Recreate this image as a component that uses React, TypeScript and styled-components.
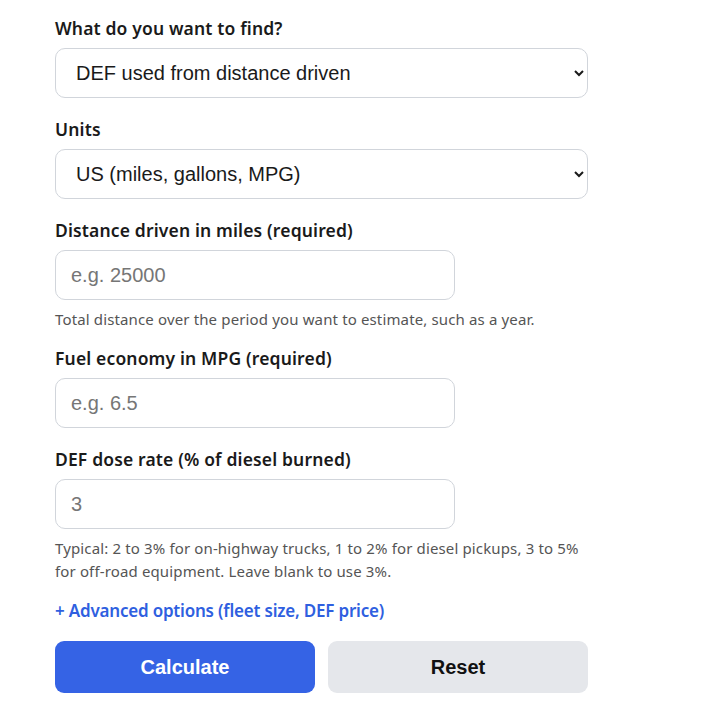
import React from "react";
import styled, { createGlobalStyle } from "styled-components";

const Global = createGlobalStyle`
  html, body { margin: 0; padding: 0; background: #fff; }
  body { font-family: "Noto Sans", "Open Sans", sans-serif; color: #1a1a1a; }
  * { box-sizing: border-box; }
`;

const Form = styled.form`
  width: 533px;
  margin: 17px 0 0 55px;
  display: flex;
  flex-direction: column;
`;

const Field = styled.div`
  display: flex;
  flex-direction: column;
  margin-bottom: 20px;
`;

const Label = styled.label`
  font-family: "Noto Sans", sans-serif;
  font-weight: 600;
  font-size: 17.5px;
  letter-spacing: 0.15px;
  line-height: 23px;
  color: #1a1a1a;
  margin-bottom: 8px;
`;

const Select = styled.select`
  width: 100%;
  height: 50px;
  padding: 0 12px 0 16px;
  font-family: "Liberation Sans", Arial, sans-serif;
  font-size: 20px;
  color: #1a1a1a;
  background: #fff;
  border: 1px solid #d1d5db;
  border-radius: 10px;
  outline: none;
`;

const Input = styled.input`
  width: 400px;
  height: 50px;
  padding: 0 15px;
  font-family: "Liberation Sans", Arial, sans-serif;
  font-size: 20px;
  color: #1a1a1a;
  background: #fff;
  border: 1px solid #d1d5db;
  border-radius: 10px;
  outline: none;
  &::placeholder { color: #767676; }
`;

const Hint = styled.p`
  margin: 8px 0 -4px;
  font-family: "Noto Sans", sans-serif;
  font-size: 15px;
  letter-spacing: 0.14px;
  line-height: 23px;
  color: #555;
`;

const AdvancedLink = styled.button`
  align-self: flex-start;
  background: none;
  border: none;
  padding: 0;
  margin: 0 0 18px;
  font-family: "Noto Sans", sans-serif;
  font-weight: 600;
  font-size: 17px;
  letter-spacing: -0.2px;
  line-height: 24px;
  color: #2f5fe0;
  cursor: pointer;
`;

const Buttons = styled.div`
  display: grid;
  grid-template-columns: 1fr 1fr;
  gap: 13px;
`;

const Button = styled.button<{ $primary?: boolean }>`
  height: 52px;
  border: none;
  border-radius: 9px;
  font-family: "Liberation Sans", Arial, sans-serif;
  font-weight: 700;
  font-size: 20px;
  color: ${(p) => (p.$primary ? "#fff" : "#111")};
  background: ${(p) => (p.$primary ? "#3563e5" : "#e5e7eb")};
  cursor: pointer;
`;

export default function App() {
  return (
    <>
      <Global />
      <Form onSubmit={(e) => e.preventDefault()}>
        <Field>
          <Label>What do you want to find?</Label>
          <Select defaultValue="def">
            <option value="def">DEF used from distance driven</option>
          </Select>
        </Field>
        <Field>
          <Label>Units</Label>
          <Select defaultValue="us">
            <option value="us">US (miles, gallons, MPG)</option>
          </Select>
        </Field>
        <Field>
          <Label>Distance driven in miles (required)</Label>
          <Input placeholder="e.g. 25000" />
          <Hint>Total distance over the period you want to estimate, such as a year.</Hint>
        </Field>
        <Field>
          <Label>Fuel economy in MPG (required)</Label>
          <Input placeholder="e.g. 6.5" />
        </Field>
        <Field>
          <Label>DEF dose rate (% of diesel burned)</Label>
          <Input placeholder="3" />
          <Hint>
            Typical: 2 to 3% for on-highway trucks, 1 to 2% for diesel pickups, 3 to 5% for off-road equipment. Leave blank to use 3%.
          </Hint>
        </Field>
        <AdvancedLink type="button">+ Advanced options (fleet size, DEF price)</AdvancedLink>
        <Buttons>
          <Button $primary type="submit">Calculate</Button>
          <Button type="button">Reset</Button>
        </Buttons>
      </Form>
    </>
  );
}
